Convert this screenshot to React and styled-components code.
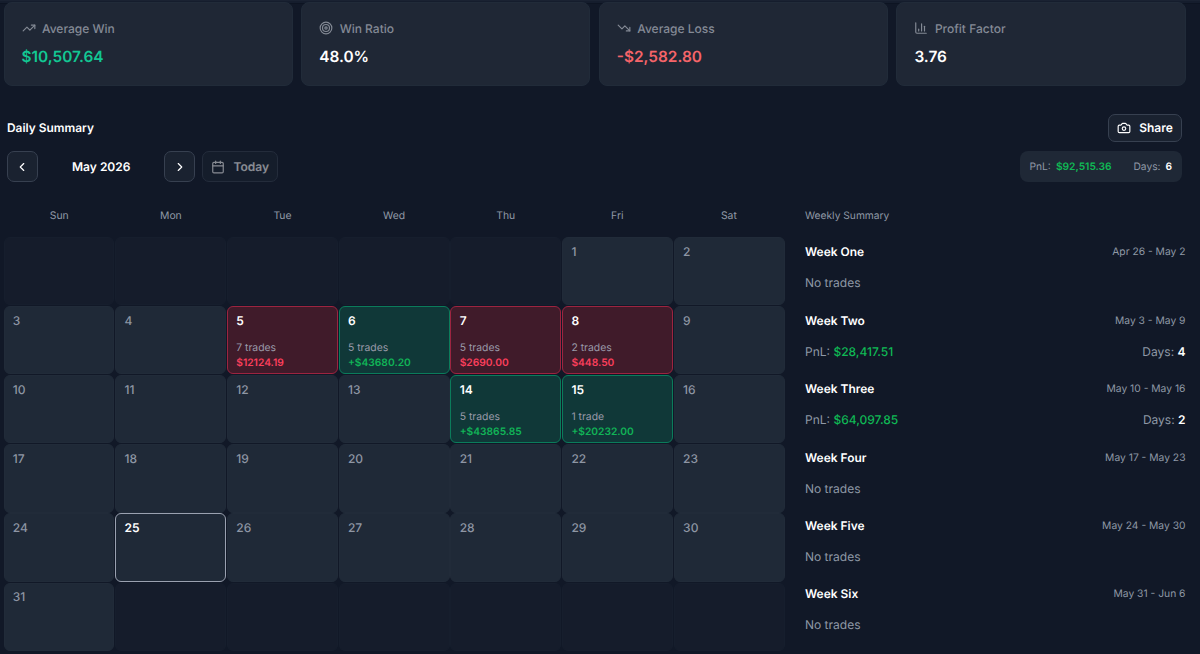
import React from "react";
import styled, { createGlobalStyle, css } from "styled-components";
import { TrendingUp, TrendingDown, Target, ChartColumn, ChevronLeft, ChevronRight, Calendar, Camera } from "lucide-react";

const GlobalStyle = createGlobalStyle`
  * { box-sizing: border-box; }
  body {
    margin: 0;
    background: #111827;
    font-family: Inter, "Liberation Sans", sans-serif;
    text-rendering: geometricPrecision;
    color: #fff;
    overflow: hidden;
  }
`;

const Page = styled.div`
  height: 654px;
  padding: 2px 14.5px 0 3.5px;
  overflow: hidden;
  background: linear-gradient(#1a2232 0 1px, #151d2d 1px 3px, #0d1422 3px 4px, transparent 4px);
`;

const Stats = styled.div`
  display: grid;
  grid-template-columns: repeat(4, 1fr);
  gap: 8.5px;
`;

const StatCard = styled.section`
  height: 84px;
  padding: 17.4px 17px;
  border: 1px solid #212b39;
  border-radius: 8px;
  background: #1f2735;
`;

const StatLabel = styled.div`
  display: flex;
  align-items: center;
  gap: 6.5px;
  height: 16px;
  color: #848a95;
  font-size: 12px;
  font-weight: 500;
`;

const StatValue = styled.div`
  margin-top: 9.4px;
  line-height: 22px;
  font-size: 15.4px;
  font-weight: 600;
  color: ${(p) => p.$color || "#fff"};
`;

const Header = styled.header`
  display: flex;
  justify-content: space-between;
  align-items: center;
  height: 28px;
  margin: 27.5px 3.5px 0 3.5px;
`;

const Title = styled.h2`
  margin: 0;
  font-size: 11.9px;
  font-weight: 600;
`;

const Button = styled.button`
  display: flex;
  align-items: center;
  justify-content: center;
  gap: ${(p) => p.$gap ?? 8.5}px;
  width: ${(p) => p.$width}px;
  height: ${(p) => p.$height || 31}px;
  padding: 0;
  border: 1px solid #374050;
  border-radius: 7px;
  background: #1a2230;
  color: #fff;
  font: 600 12px Inter, sans-serif;
  text-rendering: inherit;
  opacity: ${(p) => (p.disabled ? 0.5 : 1)};
`;

const Toolbar = styled.div`
  display: flex;
  justify-content: space-between;
  height: 31px;
  margin: 9.5px 3.5px 0 3px;
`;

const MonthNav = styled.nav`
  display: flex;
  gap: 7px;
`;

const Month = styled.div`
  width: 112.5px;
  padding-left: 1px;
  line-height: 31px;
  text-align: center;
  font-size: 12px;
  font-weight: 600;
`;

const Totals = styled.div`
  display: flex;
  align-items: center;
  justify-content: space-between;
  width: 162.5px;
  padding: 0 10px;
  border-radius: 8px;
  background: #1f2836;
  font-size: 10.24px;
  color: #8f98a6;
`;

const Figure = styled.strong`
  margin-left: ${(p) => p.$gap ?? 2.2}px;
  font-weight: ${(p) => p.$weight || 600};
  color: ${(p) => (p.$gain ? "#0fb955" : "#fff")};
`;

const Body = styled.main`
  display: grid;
  grid-template-columns: 781.2px 380.5px;
  justify-content: space-between;
  margin-top: 25px;
`;

const Weekdays = styled.div`
  display: grid;
  grid-template-columns: repeat(7, 1fr);
  height: 29.8px;
  line-height: 18px;
  text-align: center;
  font-size: 10.4px;
  color: #9098a6;
`;

const Grid = styled.div`
  display: grid;
  grid-template-columns: repeat(7, 1fr);
  grid-auto-rows: 68.3px;
  gap: 0.85px;
`;

const tones = {
  blank: css`background: #151c2b; border-color: #161e2d;`,
  idle: css`background: #1f2937; border-color: #212b39;`,
  loss: css`background: #401b2a; border-color: #9d2440;`,
  gain: css`background: #103838; border-color: #0b7c5b;`,
  today: css`background: #1f2937; border-color: #9aa1b0;`,
};

const Day = styled.div`
  display: flex;
  flex-direction: column;
  justify-content: space-between;
  padding: 5.8px 8px 3.2px 8.3px;
  border: 1px solid;
  border-radius: 6px;
  ${(p) => tones[p.$tone]}
`;

const DayNumber = styled.div`
  line-height: 15px;
  font-size: 12px;
  font-weight: ${(p) => (p.$strong ? 600 : 500)};
  color: ${(p) => (p.$strong ? "#fff" : "#8e96a4")};
`;

const Trades = styled.div`
  line-height: 14.5px;
  font-size: 10.4px;
  color: #9a9aa9;
`;

const Result = styled.div`
  line-height: 14.5px;
  font-size: 10.24px;
  font-weight: 600;
  color: ${(p) => (p.$tone === "gain" ? "#11b457" : "#fb3f5c")};
`;

const WeeklyTitle = styled.div`
  height: 26.9px;
  line-height: 18px;
  font-size: 10.24px;
  color: #9098a6;
`;

const Week = styled.section`
  display: grid;
  align-content: start;
  gap: 11px;
  height: 68.4px;
  padding-top: 8px;
`;

const WeekRow = styled.div`
  display: flex;
  justify-content: space-between;
  align-items: center;
  height: 20px;
  font-size: 12px;
  color: #8f98a6;
`;

const WeekName = styled.h3`
  margin: 0;
  font-size: 11.95px;
  font-weight: 600;
  color: #fff;
`;

const Range = styled.span`
  padding-top: 1px;
  font-size: 10.3px;
`;

const stats = [
  { Icon: TrendingUp, label: "Average Win", value: "$10,507.64", color: "#12c793" },
  { Icon: Target, label: "Win Ratio", value: "48.0%" },
  { Icon: TrendingDown, label: "Average Loss", value: "-$2,582.80", color: "#f66469" },
  { Icon: ChartColumn, label: "Profit Factor", value: "3.76" },
];

const weekdays = ["Sun", "Mon", "Tue", "Wed", "Thu", "Fri", "Sat"];

const results = {
  5: { tone: "loss", trades: "7 trades", amount: "$12124.19" },
  6: { tone: "gain", trades: "5 trades", amount: "+$43680.20" },
  7: { tone: "loss", trades: "5 trades", amount: "$2690.00" },
  8: { tone: "loss", trades: "2 trades", amount: "$448.50" },
  14: { tone: "gain", trades: "5 trades", amount: "+$43865.85" },
  15: { tone: "gain", trades: "1 trade", amount: "+$20232.00" },
};

const weeks = [
  { name: "Week One", range: "Apr 26 - May 2" },
  { name: "Week Two", range: "May 3 - May 9", pnl: "$28,417.51", days: 4 },
  { name: "Week Three", range: "May 10 - May 16", pnl: "$64,097.85", days: 2 },
  { name: "Week Four", range: "May 17 - May 23" },
  { name: "Week Five", range: "May 24 - May 30" },
  { name: "Week Six", range: "May 31 - Jun 6" },
];

const TODAY = 25;
const days = Array.from({ length: 42 }, (_, i) => i - 4);

function DayCell({ day }) {
  if (day < 1 || day > 31) return <Day $tone="blank" />;
  const result = results[day];
  const isToday = day === TODAY;
  return (
    <Day $tone={result ? result.tone : isToday ? "today" : "idle"}>
      <DayNumber $strong={Boolean(result) || isToday}>{day}</DayNumber>
      {result && (
        <div>
          <Trades>{result.trades}</Trades>
          <Result $tone={result.tone}>{result.amount}</Result>
        </div>
      )}
    </Day>
  );
}

export default function App() {
  return (
    <>
      <GlobalStyle />
      <Page>
        <Stats>
          {stats.map(({ Icon, label, value, color }) => (
            <StatCard key={label}>
              <StatLabel><Icon size={14} strokeWidth={2} />{label}</StatLabel>
              <StatValue $color={color}>{value}</StatValue>
            </StatCard>
          ))}
        </Stats>
        <Header>
          <Title>Daily Summary</Title>
          <Button $width={74.5} $height={28}><Camera size={14} />Share</Button>
        </Header>
        <Toolbar>
          <MonthNav>
            <Button $width={31} aria-label="Previous month"><ChevronLeft size={14} /></Button>
            <Month>May 2026</Month>
            <Button $width={31} aria-label="Next month"><ChevronRight size={14} /></Button>
            <Button $width={76} disabled><Calendar size={14} />Today</Button>
          </MonthNav>
          <Totals>
            <span>PnL: <Figure $gain>$92,515.36</Figure></span>
            <span>Days: <Figure $gap={2}>6</Figure></span>
          </Totals>
        </Toolbar>
        <Body>
          <div>
            <Weekdays>{weekdays.map((d) => <span key={d}>{d}</span>)}</Weekdays>
            <Grid>{days.map((d) => <DayCell key={d} day={d} />)}</Grid>
          </div>
          <aside>
            <WeeklyTitle>Weekly Summary</WeeklyTitle>
            {weeks.map((w) => (
              <Week key={w.name}>
                <WeekRow><WeekName>{w.name}</WeekName><Range>{w.range}</Range></WeekRow>
                {w.pnl ? (
                  <WeekRow>
                    <span>PnL: <Figure $gain $gap={0} $weight={500}>{w.pnl}</Figure></span>
                    <span>Days: <Figure $gap={0}>{w.days}</Figure></span>
                  </WeekRow>
                ) : (
                  <WeekRow>No trades</WeekRow>
                )}
              </Week>
            ))}
          </aside>
        </Body>
      </Page>
    </>
  );
}
